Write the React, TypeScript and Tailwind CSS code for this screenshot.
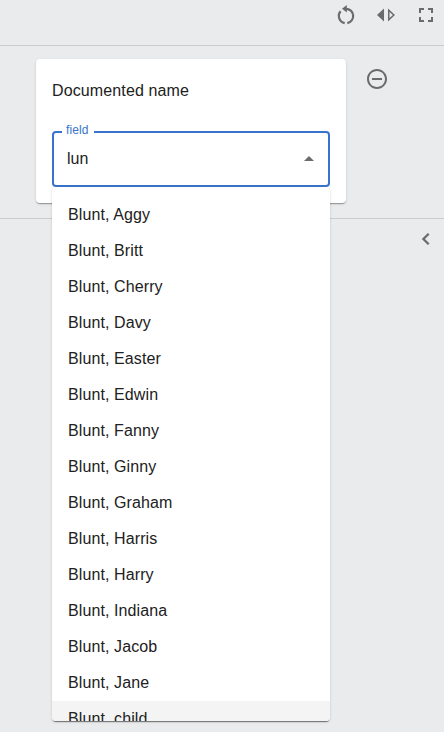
import React from "react";

const names = [
  "Blunt, Aggy", "Blunt, Britt", "Blunt, Cherry", "Blunt, Davy", "Blunt, Easter",
  "Blunt, Edwin", "Blunt, Fanny", "Blunt, Ginny", "Blunt, Graham", "Blunt, Harris",
  "Blunt, Harry", "Blunt, Indiana", "Blunt, Jacob", "Blunt, Jane", "Blunt, child",
];

function Icon({ children, className = "" }: { children: React.ReactNode; className?: string }) {
  return (
    <svg viewBox="0 0 24 24" className={`size-6 shrink-0 text-[#6b6b6b] ${className}`} fill="currentColor">
      {children}
    </svg>
  );
}

export default function App() {
  return (
    <div className="flex h-[732px] w-[444px] flex-col overflow-hidden bg-[#eaebed] font-['Liberation_Sans',Arial,sans-serif] text-base text-[#212121]">
      <header className="flex h-[46px] shrink-0 justify-end gap-4 border-b border-[#cbccce] pr-1.5 pt-[3px]">
        <Icon>
          <path d="M12 5.800a7.200 7.200 0 0 1 1.300 14.280M10.700 20.080A7.200 7.200 0 0 1 6.600 8.300" fill="none" stroke="currentColor" strokeWidth="2.200" />
          <path d="M12.800 2v7.600L8 5.800z" />
        </Icon>
        <Icon>
          <path d="M10 5.500v13L3 12z" />
          <path d="M14 5.500v13l7-6.500zm1.500 3.400 3.400 3.100-3.400 3.100z" fillRule="evenodd" />
        </Icon>
        <Icon>
          <path d="M7 14H5v5h5v-2H7v-3zm-2-4h2V7h3V5H5v5zm12 7h-3v2h5v-5h-2v3zM14 5v2h3v3h2V5h-5z" />
        </Icon>
      </header>
      <section className="flex h-[173px] shrink-0 items-start border-b border-[#cbccce] pl-9 pt-[13px]">
        <div className="h-[144px] w-[310px] rounded bg-white px-4 pt-5 shadow-[0_2px_1px_-1px_rgba(0,0,0,0.2),0_1px_1px_rgba(0,0,0,0.14),0_1px_3px_rgba(0,0,0,0.12)]">
          <h1 className="h-6 leading-6 tracking-[0.12px]">Documented name</h1>
          <div className="relative mt-7 flex h-14 w-[278px] items-center justify-between rounded border-2 border-[#3874cb] pl-[13px] pr-[7px]">
            <label className="absolute -top-[11px] left-2 w-8 bg-white px-1 text-xs leading-4 tracking-[0.11px] text-[#3874cb]">field</label>
            <span>lun</span>
            <Icon><path d="m7 14 5-5 5 5z" /></Icon>
            <ul className="absolute -left-0.5 top-[54px] z-10 h-[534px] w-[278px] overflow-hidden rounded bg-white pt-2.5 shadow-[0_2px_1px_-1px_rgba(0,0,0,0.4),0_1px_1px_rgba(0,0,0,0.14),0_1px_3px_rgba(0,0,0,0.12)]">
              {names.map((name) => (
                <li key={name} className="h-9 px-4 leading-9 tracking-[0.1px] last:bg-[#f4f4f4]">{name}</li>
              ))}
            </ul>
          </div>
        </div>
        <Icon className="ml-[19px] mt-2">
          <path d="M7 11v2h10v-2H7zm5-9C6.480 2 2 6.480 2 12s4.480 10 10 10 10-4.480 10-10S17.520 2 12 2zm0 18c-4.410 0-8-3.590-8-8s3.590-8 8-8 8 3.590 8 8-3.590 8-8 8z" />
        </Icon>
      </section>
      <div className="flex justify-end pr-1.5 pt-2">
        <Icon><path d="m14.700 6.700-5.300 5.300 5.300 5.300" fill="none" stroke="currentColor" strokeWidth="2.300" /></Icon>
      </div>
    </div>
  );
}
